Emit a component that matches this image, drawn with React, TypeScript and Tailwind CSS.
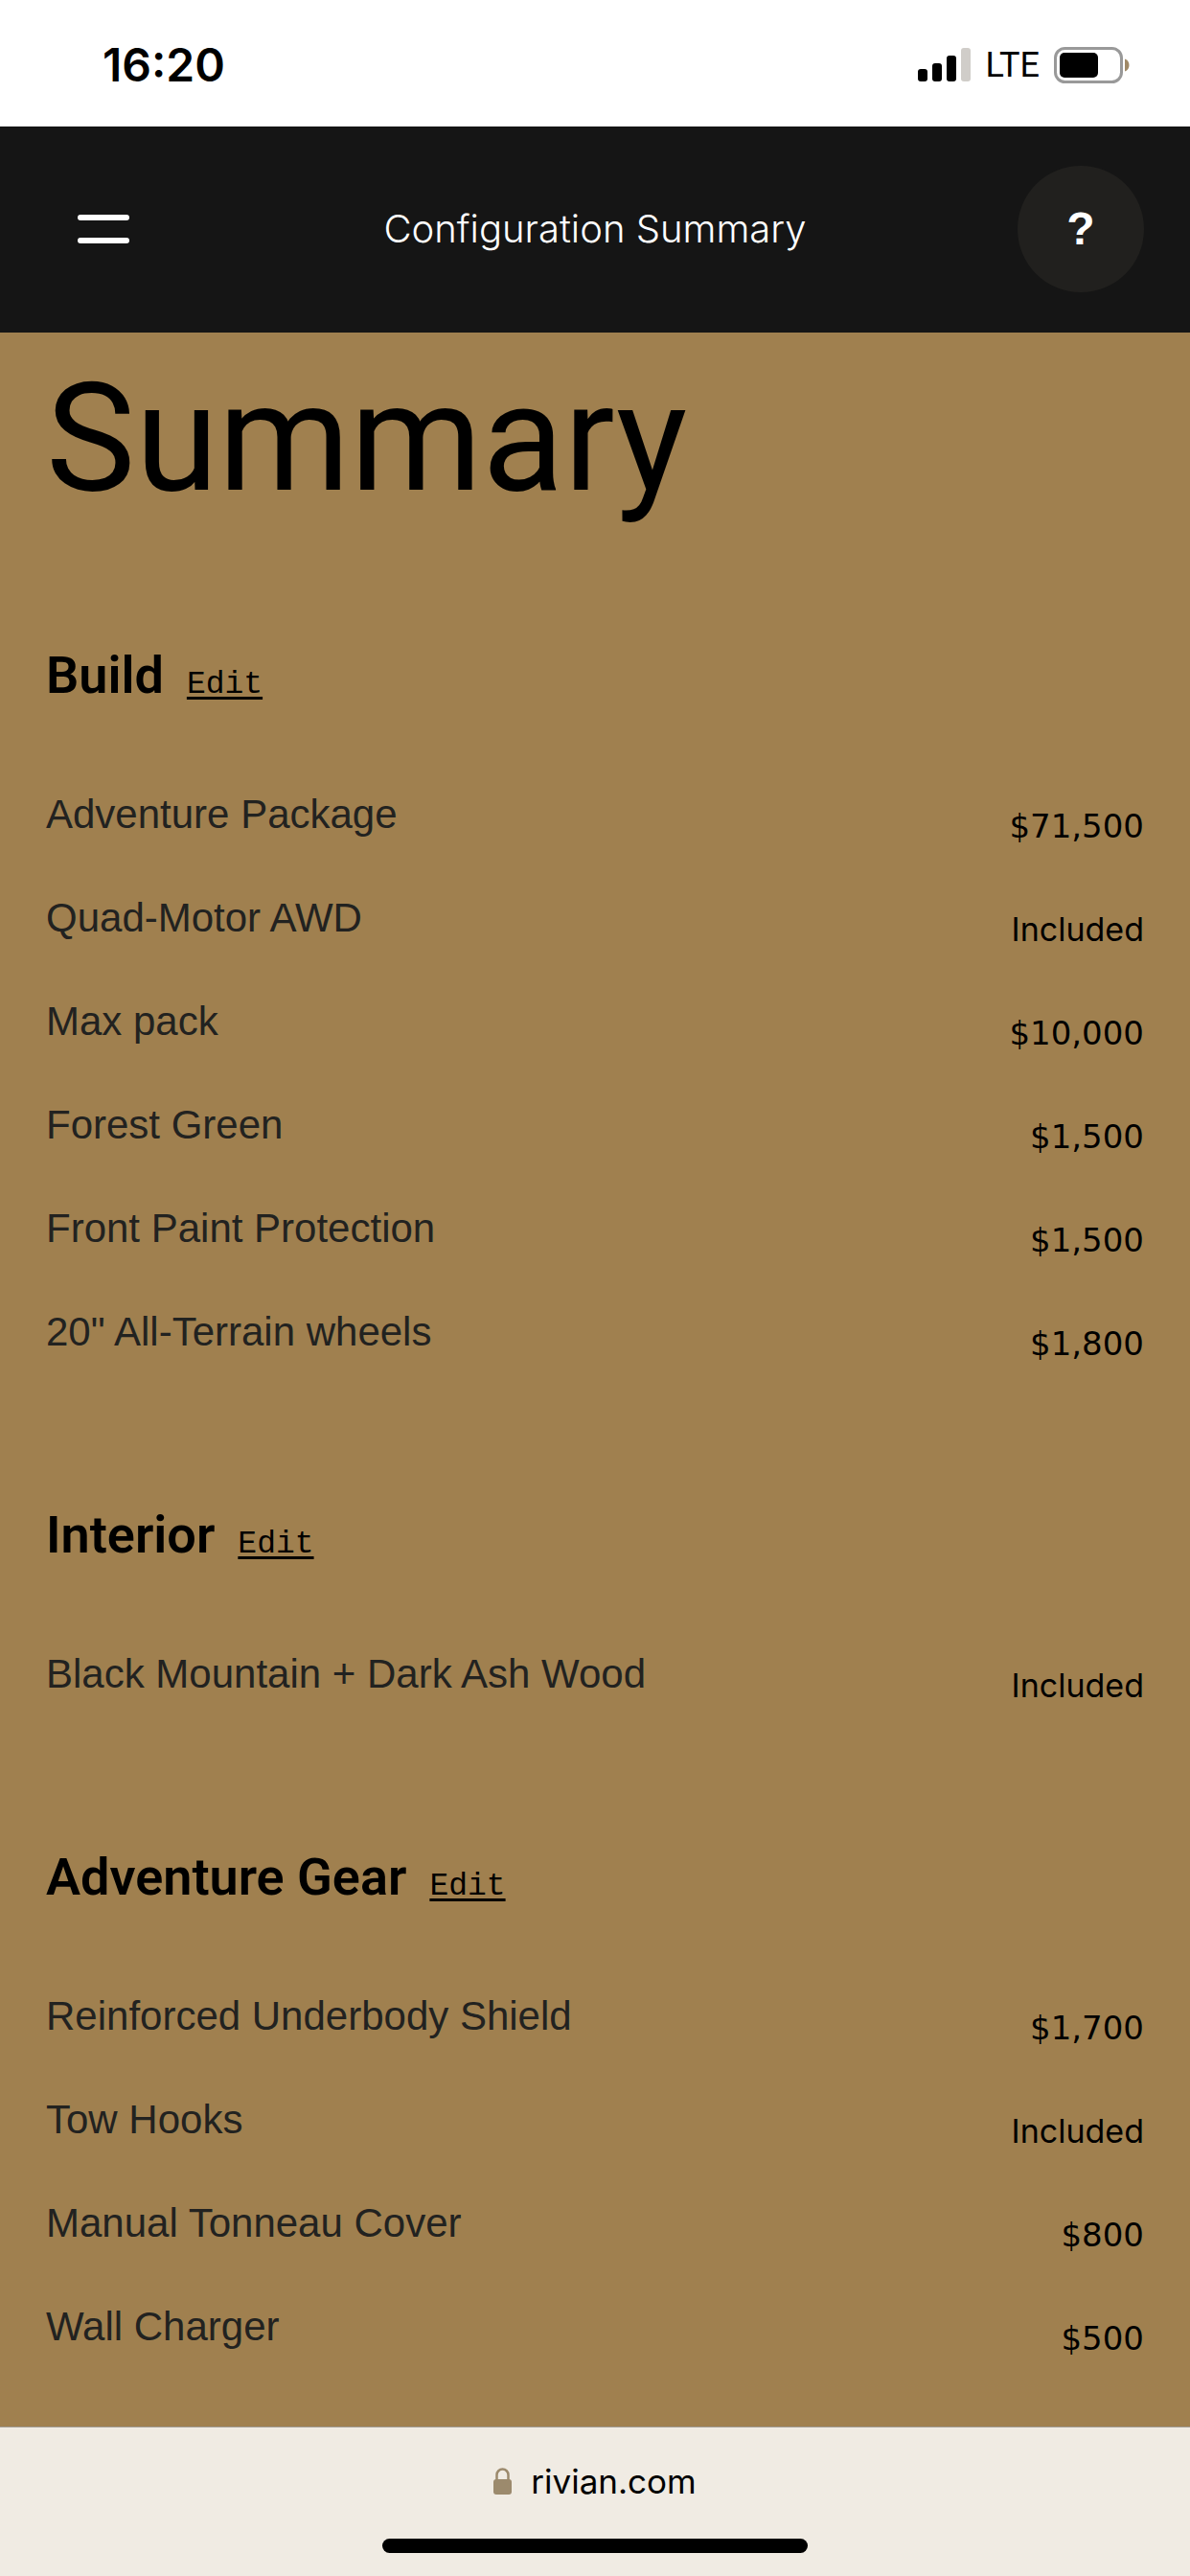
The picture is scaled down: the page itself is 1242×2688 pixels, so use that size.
import clsx from "clsx";

type Item = { name: string; price: string };
type Section = { title: string; items: Item[] };

const sections: Section[] = [
  {
    title: "Build",
    items: [
      { name: "Adventure Package", price: "$71,500" },
      { name: "Quad-Motor AWD", price: "Included" },
      { name: "Max pack", price: "$10,000" },
      { name: "Forest Green", price: "$1,500" },
      { name: "Front Paint Protection", price: "$1,500" },
      { name: '20" All-Terrain wheels', price: "$1,800" },
    ],
  },
  {
    title: "Interior",
    items: [{ name: "Black Mountain + Dark Ash Wood", price: "Included" }],
  },
  {
    title: "Adventure Gear",
    items: [
      { name: "Reinforced Underbody Shield", price: "$1,700" },
      { name: "Tow Hooks", price: "Included" },
      { name: "Manual Tonneau Cover", price: "$800" },
      { name: "Wall Charger", price: "$500" },
    ],
  },
];

function StatusBar() {
  return (
    <div className="flex h-[132px] items-center justify-between bg-white pt-1 pr-[62px] pl-[107px] font-['Inter',sans-serif] text-black">
      <span className="text-[48px] leading-[60px] font-semibold">16:20</span>
      <div className="flex items-center gap-[15px]">
        <svg width="56" height="36" viewBox="0 0 56 36" aria-label="Signal">
          <rect x="0" y="22" width="10" height="13" rx="3" />
          <rect x="15" y="16" width="10" height="19" rx="3" />
          <rect x="30" y="8" width="10" height="27" rx="3" />
          <rect x="45" y="0" width="10" height="35" rx="3" fill="#d0cdc9" />
        </svg>
        <span className="font-['Roboto',sans-serif] text-[36px] leading-[48px]">LTE</span>
        <svg width="80" height="38" viewBox="0 0 80 38" aria-label="Battery">
          <rect x="1.5" y="1.5" width="69" height="35" rx="10" fill="none" stroke="#999999" strokeWidth="3" />
          <rect x="6" y="6" width="40" height="26" rx="5" />
          <path d="M74 12.5c3 1.200 4.500 3.600 4.500 6.500s-1.500 5.300-4.500 6.500z" fill="#a08966" />
        </svg>
      </div>
    </div>
  );
}

function NavBar() {
  return (
    <header className="grid h-[215px] grid-cols-[1fr_auto_1fr] items-center bg-[#151515] px-12 pb-[2px] text-white">
      <button type="button" aria-label="Menu" className="ml-[33px] flex w-[54px] flex-col gap-[18px]">
        <span className="h-[6px] w-full rounded-full bg-white" />
        <span className="h-[6px] w-full rounded-full bg-white" />
      </button>
      <p className="font-['Inter',sans-serif] text-[40px] leading-[60px] font-light">Configuration Summary</p>
      <button
        type="button"
        aria-label="Help"
        className="flex size-[132px] items-center justify-center justify-self-end rounded-full bg-[#21201e] font-['Liberation_Sans',sans-serif] text-[48px] font-bold"
      >
        ?
      </button>
    </header>
  );
}

function SummarySection({ title, items }: Section) {
  return (
    <section>
      <div className="mb-[83px] flex items-baseline gap-6">
        <h2 className="font-['Roboto',sans-serif] text-[54px] leading-[64px] font-semibold">{title}</h2>
        <a
          href="#edit"
          className="font-['Liberation_Mono',monospace] text-[33px] leading-[40px] underline decoration-[3px] underline-offset-4"
        >
          Edit
        </a>
      </div>
      <table className="w-full">
        <tbody>
          {items.map((item) => (
            <tr key={item.name} className="h-27 align-top">
              <th scope="row" className="text-left text-[42px] leading-[60px] font-normal text-[#222220]">
                {item.name}
              </th>
              {/* amounts use wide figures, words use the regular sans */}
              <td
                className={clsx(
                  "pt-3 text-right text-[34px] leading-[60px]",
                  item.price.startsWith("$") ? "font-['DejaVu_Sans',sans-serif]" : "font-['Inter',sans-serif]"
                )}
              >
                {item.price}
              </td>
            </tr>
          ))}
        </tbody>
      </table>
    </section>
  );
}

function BrowserBar() {
  return (
    <footer className="flex flex-col items-center border-t border-[#a09a92] bg-[#f0ebe3] pt-8 pb-6">
      <div className="flex items-center gap-5 font-['Inter',sans-serif] text-[35px] leading-[48px] text-black">
        <svg width="19" height="28" viewBox="0 0 19 28" aria-hidden="true">
          <path d="M3.500 13V7.500a6 6 0 0 1 12 0V13" fill="none" stroke="#9c8a6d" strokeWidth="2.500" />
          <rect x="0" y="12" width="19" height="16" rx="3" fill="#9c8a6d" />
        </svg>
        <span>rivian.com</span>
      </div>
      <div className="mt-9 h-[15px] w-[444px] rounded-full bg-black" />
    </footer>
  );
}

export default function App() {
  return (
    <div className="flex min-h-screen flex-col bg-[#a0804f] font-['Liberation_Sans',Arial,sans-serif] text-black">
      <StatusBar />
      <NavBar />
      <main className="flex-1 px-12 pt-5 pb-6">
        <h1 className="mb-[126px] font-['Roboto',sans-serif] text-[157px] leading-[180px]">Summary</h1>
        <div className="flex flex-col gap-[102px]">
          {sections.map((section) => (
            <SummarySection key={section.title} {...section} />
          ))}
        </div>
      </main>
      <BrowserBar />
    </div>
  );
}
